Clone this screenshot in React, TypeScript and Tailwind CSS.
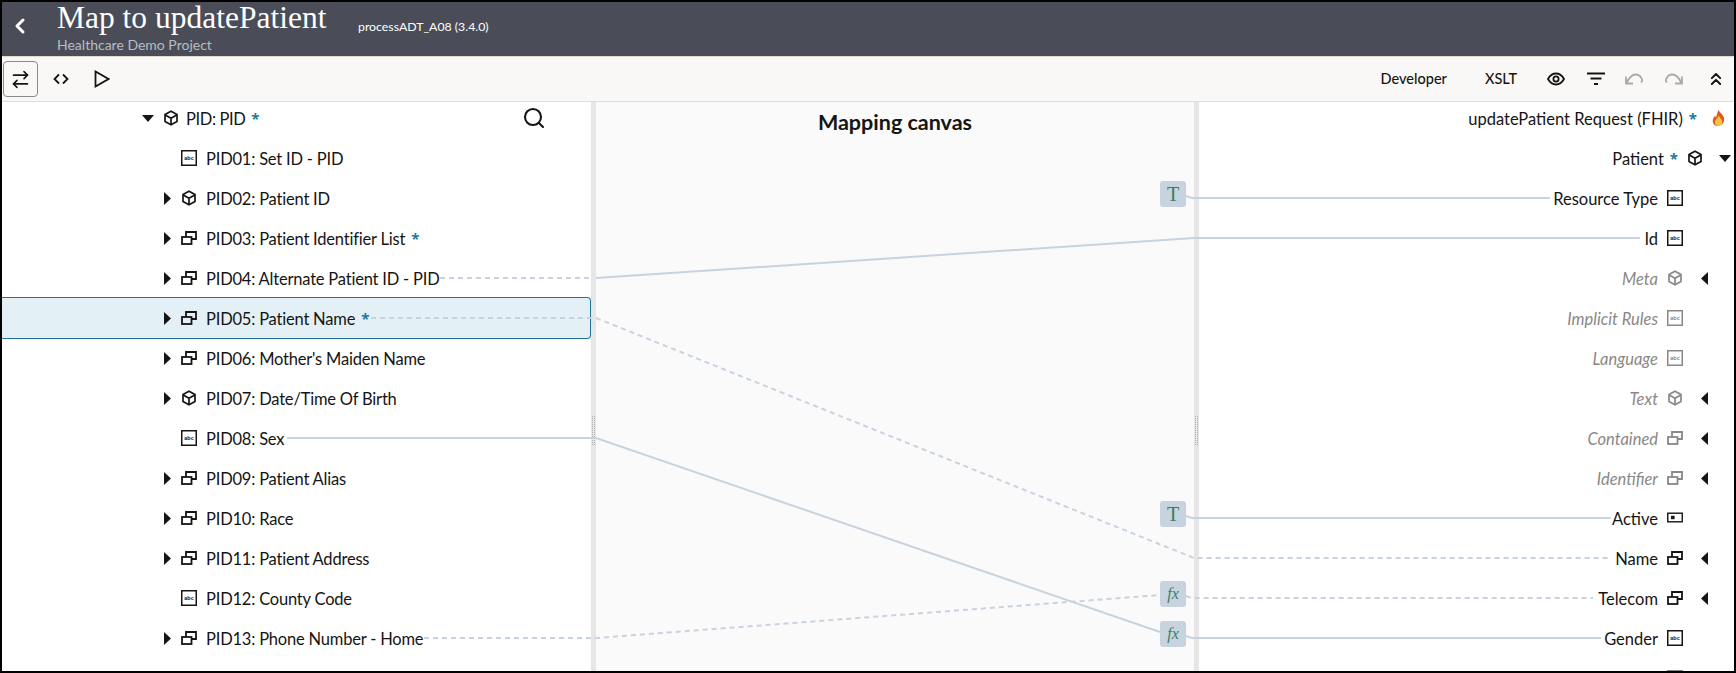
import { ArrowRightLeft, ChevronLeft, ChevronsUp, Search } from "lucide-react";

type Kind = "cube" | "abc" | "copies" | "bool" | "box";

const sourceRows: {
  label: string;
  kind: Kind;
  caret?: boolean;
  star?: boolean;
  selected?: boolean;
}[] = [
  { label: "PID01: Set ID - PID", kind: "abc" },
  { label: "PID02: Patient ID", kind: "cube", caret: true },
  { label: "PID03: Patient Identifier List", kind: "copies", caret: true, star: true },
  { label: "PID04: Alternate Patient ID - PID", kind: "copies", caret: true },
  { label: "PID05: Patient Name", kind: "copies", caret: true, star: true, selected: true },
  { label: "PID06: Mother's Maiden Name", kind: "copies", caret: true },
  { label: "PID07: Date/Time Of Birth", kind: "cube", caret: true },
  { label: "PID08: Sex", kind: "abc" },
  { label: "PID09: Patient Alias", kind: "copies", caret: true },
  { label: "PID10: Race", kind: "copies", caret: true },
  { label: "PID11: Patient Address", kind: "copies", caret: true },
  { label: "PID12: County Code", kind: "abc" },
  { label: "PID13: Phone Number - Home", kind: "copies", caret: true },
];

const targetRows: { label: string; kind: Kind; caret?: boolean; muted?: boolean }[] = [
  { label: "Resource Type", kind: "abc" },
  { label: "Id", kind: "abc" },
  { label: "Meta", kind: "cube", caret: true, muted: true },
  { label: "Implicit Rules", kind: "abc", muted: true },
  { label: "Language", kind: "abc", muted: true },
  { label: "Text", kind: "cube", caret: true, muted: true },
  { label: "Contained", kind: "copies", caret: true, muted: true },
  { label: "Identifier", kind: "copies", caret: true, muted: true },
  { label: "Active", kind: "bool" },
  { label: "Name", kind: "copies", caret: true },
  { label: "Telecom", kind: "copies", caret: true },
  { label: "Gender", kind: "abc" },
  { label: "", kind: "box", muted: true },
];

function TypeIcon({ kind }: { kind: Kind }) {
  if (kind === "abc" || kind === "box") {
    return (
      <svg width="16" height="16" viewBox="0 0 16 16" className="shrink-0">
        <rect x="0.75" y="0.75" width="14.5" height="14.5" fill="none" stroke="currentColor" strokeWidth="1.5" />
        {kind === "abc" && (
          <text x="8" y="9.8" textAnchor="middle" fontSize="5.5" fontWeight="700" fill="currentColor" fontFamily="'Liberation Sans', sans-serif">
            abc
          </text>
        )}
      </svg>
    );
  }
  if (kind === "copies") {
    return (
      <svg width="16" height="16" viewBox="0 0 16 16" fill="none" stroke="currentColor" strokeWidth="1.8" className="shrink-0">
        <path d="M5 7V2h10v7h-4.500" />
        <rect x="1" y="7" width="9.500" height="7" />
      </svg>
    );
  }
  if (kind === "bool") {
    return (
      <svg width="16" height="16" viewBox="0 0 16 16" className="shrink-0">
        <rect x="0.75" y="3.2" width="14.5" height="8.6" fill="none" stroke="currentColor" strokeWidth="1.4" />
        <rect x="4" y="5.8" width="3.6" height="3.4" fill="currentColor" />
      </svg>
    );
  }
  return (
    <svg width="16" height="16" viewBox="0 0 16 16" fill="none" stroke="currentColor" strokeWidth="1.7" strokeLinejoin="round" className="shrink-0">
      <path d="M8 1.2l6 3.4v6.8l-6 3.4-6-3.4V4.6z" />
      <path d="M2.3 4.900L8 8.200l5.700-3.300M8 8.200v6.200" />
    </svg>
  );
}

function Caret({ dir }: { dir: "right" | "down" | "left" }) {
  if (dir === "down") {
    return (
      <svg width="12" height="7" viewBox="0 0 12 7" className="shrink-0">
        <path d="M0 0h12L6 7z" fill="#161513" />
      </svg>
    );
  }
  return (
    <svg width="7" height="13" viewBox="0 0 7 13" className="shrink-0">
      <path d={dir === "right" ? "M0 0l7 6.500L0 13z" : "M7 0L0 6.500 7 13z"} fill="#161513" />
    </svg>
  );
}

function Star() {
  return <span className="font-['Noto_Sans'] text-[15px] leading-none font-bold text-[#1f7a9c]">*</span>;
}

function Chip({ kind, className }: { kind: "T" | "fx"; className: string }) {
  return (
    <div
      className={`absolute flex h-[26px] w-[26px] items-center justify-center rounded-[3px] bg-[#c8d3e0] text-[#3f7d58] ${className}`}
      style={{ fontFamily: "'Liberation Serif', serif" }}
    >
      {kind === "T" ? (
        <span className="text-[20px] leading-none">T</span>
      ) : (
        <span className="text-[16px] leading-none italic">fx</span>
      )}
    </div>
  );
}

function Grip() {
  return (
    <div className="grid h-fit grid-cols-2 gap-[1px]">
      {Array.from({ length: 30 }).map((_, i) => (
        <span key={i} className="h-[1px] w-[1px] bg-[#b0b0b0]" />
      ))}
    </div>
  );
}

function Connectors() {
  const line = { stroke: "#c8d3e0", strokeWidth: 2, fill: "none" };
  const dash = { ...line, strokeDasharray: "5 4" };
  return (
    <svg width="1736" height="673" className="pointer-events-none absolute top-[-2px] left-[-2px]">
      <path d="M1186 196l6 2H1550" {...line} />
      <path d="M596 278L1194 238H1640" {...line} />
      <path d="M440 278H592" {...dash} />
      <path d="M371 318H596L1194 558H1609" {...dash} />
      <path d="M287 438H596L1160 632" {...line} />
      <path d="M1186 636l6 2H1601" {...line} />
      <path d="M424 638H596L1160 595" {...dash} />
      <path d="M1186 596l6 2H1593" {...dash} />
      <path d="M1186 516l6 2H1611" {...line} />
    </svg>
  );
}

export default function App() {
  return (
    <div
      className="relative flex h-[673px] w-[1736px] flex-col overflow-hidden border-2 border-black bg-white text-[16.5px] text-[#161513]"
      style={{ fontFamily: "Lato, sans-serif" }}
    >
      <header className="flex h-[55px] shrink-0 border-b border-[#dfdccf] bg-[#4a4d57]">
        <div className="flex w-[55px] items-center pb-[6px] pl-[6px]">
          <ChevronLeft className="size-[24px] text-white" strokeWidth={3} />
        </div>
        <div className="w-[301px]">
          <h1
            className="text-[31.5px] leading-[31px] text-white"
            style={{ fontFamily: "'Liberation Serif', serif" }}
          >
            Map to updatePatient
          </h1>
          <p className="mt-[5px] text-[14px] leading-[14px] text-[#b9bcc2]">Healthcare Demo Project</p>
        </div>
        <p className="pt-[17px] text-[12.3px] leading-[16px] text-white">processADT_A08 (3.4.0)</p>
      </header>

      <div className="flex h-[45px] shrink-0 items-center border-b border-[#dedede] bg-[#f9f8f6]">
        <button className="ml-[1px] flex h-[36px] w-[35px] items-center justify-center rounded-[4px] border border-[#8a8a8a]">
          <ArrowRightLeft className="size-[21px]" strokeWidth={1.8} />
        </button>
        <svg width="16" height="12" viewBox="0 0 16 12" fill="none" stroke="#161513" strokeWidth="1.8" className="ml-[15px]">
          <path d="M6 1.500L1.500 6 6 10.500M10 1.500L14.500 6 10 10.500" />
        </svg>
        <svg width="16" height="18" viewBox="0 0 16 18" fill="none" stroke="#161513" strokeWidth="1.8" className="ml-[25px]">
          <path d="M1.500 1.500v15l13-7.500z" />
        </svg>
        <span className="ml-auto text-[14.500px] font-medium">Developer</span>
        <span className="ml-[38px] text-[14.500px] font-medium">XSLT</span>
        <svg width="18" height="14" viewBox="0 0 18 14" fill="none" stroke="#161513" strokeWidth="1.8" className="ml-[30px]">
          <path d="M1 7c2-3.600 4.800-5.500 8-5.500s6 1.900 8 5.500c-2 3.600-4.800 5.500-8 5.500S3 10.600 1 7z" />
          <circle cx="9" cy="7" r="2.600" />
        </svg>
        <svg width="18" height="14" viewBox="0 0 18 14" stroke="#161513" strokeWidth="1.8" className="ml-[22px]">
          <path d="M0 1.500h18M3.500 6.500h11M7 12h4" />
        </svg>
        <svg width="18" height="14" viewBox="0 0 18 14" fill="none" stroke="#aaaaaa" strokeWidth="1.8" className="ml-[20px]">
          <path d="M1 4.500v7h7M1.500 11C4 6 7 2.500 10.500 2.500c3 0 5.500 2 6.500 5 .2.800 0 2-1 3" />
        </svg>
        <svg width="18" height="14" viewBox="0 0 18 14" fill="none" stroke="#aaaaaa" strokeWidth="1.8" className="ml-[22px]">
          <path d="M17 4.500v7h-7M16.500 11C14 6 11 2.500 7.500 2.500c-3 0-5.500 2-6.500 5-.2.800 0 2 1 3" />
        </svg>
        <ChevronsUp className="mr-[8px] ml-[23px] size-[20px]" strokeWidth={2.4} />
      </div>

      <div className="flex min-h-0 flex-1">
        <section className="w-[589px] shrink-0 overflow-hidden">
          <div className="mt-[-4px] flex h-10 items-center pl-[140px]">
            <Caret dir="down" />
            <span className="ml-[9px]">
              <TypeIcon kind="cube" />
            </span>
            <span className="ml-[7px] pt-[2px] tracking-[-0.4px]">PID: PID</span>
            <span className="ml-[6px]">
              <Star />
            </span>
            <Search className="mr-[45px] ml-auto size-[24px]" strokeWidth={2.1} />
          </div>
          {sourceRows.map((row) => (
            <div
              key={row.label}
              className={
                row.selected
                  ? "-my-px flex h-[42px] items-center rounded-r-[4px] border-y border-r border-[#1f7396] bg-[#e3f0f6]"
                  : "flex h-10 items-center"
              }
            >
              <span className="flex w-[179px] shrink-0 justify-end pr-[10px]">
                {row.caret && <Caret dir="right" />}
              </span>
              <span className="flex">
                <TypeIcon kind={row.kind} />
              </span>
              <span className="ml-[9px] pt-[2px] tracking-[-0.2px] whitespace-nowrap">{row.label}</span>
              {row.star && (
                <span className="ml-[6px]">
                  <Star />
                </span>
              )}
            </div>
          ))}
        </section>

        <div className="flex w-[5px] shrink-0 items-start justify-center bg-[#e6e6e6] pt-[314px]">
          <Grip />
        </div>

        <section className="relative w-[598px] shrink-0 bg-[#fafafa]">
          <h2 className="pt-[6px] text-center text-[21.5px] leading-[28px] font-bold">Mapping canvas</h2>
          <Chip kind="T" className="top-[79px] left-[564px]" />
          <Chip kind="T" className="top-[399px] left-[564px]" />
          <Chip kind="fx" className="top-[479px] left-[564px]" />
          <Chip kind="fx" className="top-[519px] left-[564px]" />
        </section>

        <div className="flex w-[5px] shrink-0 items-start justify-center bg-[#e6e6e6] pt-[314px]">
          <Grip />
        </div>

        <section className="min-w-0 flex-1 overflow-hidden">
          <div className="mt-[-4px] flex h-10 items-center justify-end pr-[9px]">
            <span className="pt-[2px]">updatePatient Request (FHIR)</span>
            <span className="ml-[6px]">
              <Star />
            </span>
            <svg width="13" height="18" viewBox="0 0 14 18" className="ml-[15px]">
              <path d="M7 0c1 3 5 5 6 9 .8 4-2 8-6 8.500C3 18 0 14.500 1 10.500c.4-1.600 1.500-2.500 2-4 .6 1 1 1.500 1.500 1.800C5 5.500 6 3 7 0z" fill="#e2571f" />
              <path d="M7 6c.6 2 4 4 4 7.500 0 2.500-1.800 4-4 4s-4-1.500-4-4c0-1.500 1-2.500 1.500-3.500C5.500 9.500 6.700 8 7 6z" fill="#f9c33d" />
            </svg>
          </div>
          <div className="flex h-10 items-center justify-end pr-[3px]">
            <span className="pt-[2px]">Patient</span>
            <span className="ml-[6px]">
              <Star />
            </span>
            <span className="ml-[9px] flex">
              <TypeIcon kind="cube" />
            </span>
            <span className="ml-[16px] flex">
              <Caret dir="down" />
            </span>
          </div>
          {targetRows.map((row, i) => (
            <div
              key={i}
              className={`flex h-10 items-center justify-end pr-[26px] ${row.muted ? "text-[#8a8886]" : ""}`}
            >
              <span className={row.muted ? "pt-[2px] italic" : "pt-[2px]"}>{row.label}</span>
              <span className="ml-[9px] flex">
                <TypeIcon kind={row.kind} />
              </span>
              <span className="flex w-[25px] justify-end">{row.caret && <Caret dir="left" />}</span>
            </div>
          ))}
        </section>
      </div>

      <Connectors />
    </div>
  );
}
